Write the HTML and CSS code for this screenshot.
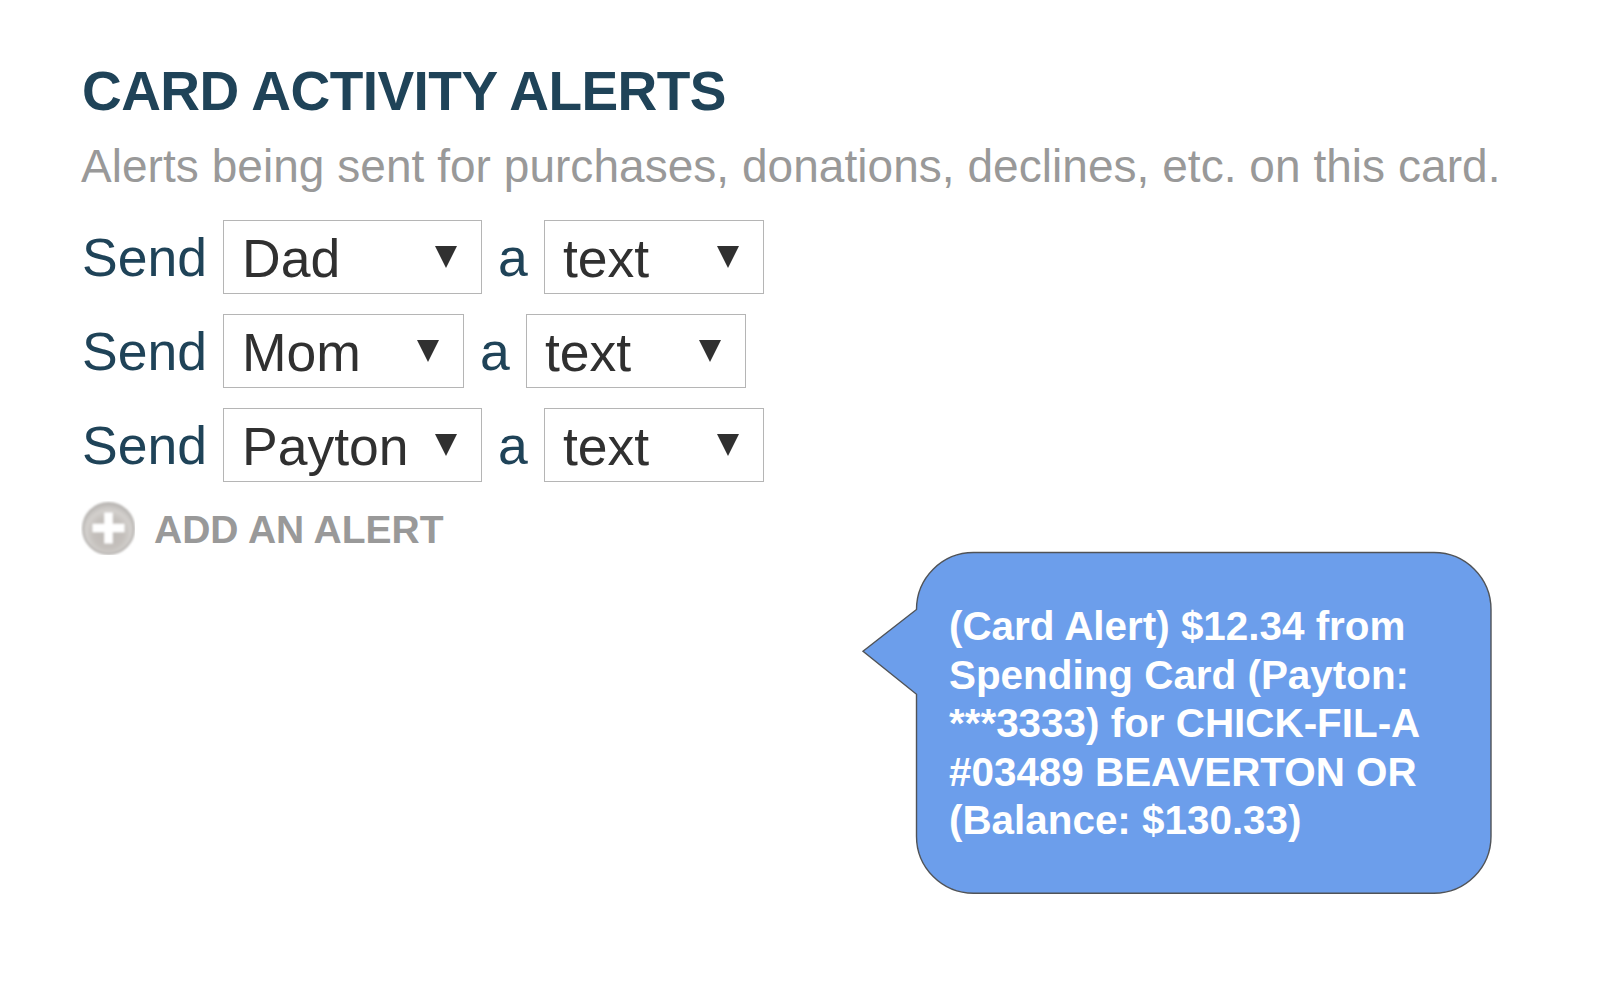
FILE: index.html
```html
<!DOCTYPE html>
<html lang="en">

<head>
    <meta charset="utf-8">
    <title>Card Activity Alerts</title>
    <link rel="stylesheet" href="styles.css">
</head>

<body>

    <div class="page">
        <h1 class="title">CARD ACTIVITY ALERTS</h1>
        <p class="subtitle">Alerts being sent for purchases, donations, declines, etc. on this card.</p>

        <div class="alerts">
            <div class="alert-row">
                <span class="send">Send</span>
                <div class="select wide"><span>Dad</span><i class="arrow"></i></div>
                <span class="article">a</span>
                <div class="select method"><span>text</span><i class="arrow"></i></div>
            </div>
            <div class="alert-row">
                <span class="send">Send</span>
                <div class="select narrow"><span>Mom</span><i class="arrow"></i></div>
                <span class="article">a</span>
                <div class="select method"><span>text</span><i class="arrow"></i></div>
            </div>
            <div class="alert-row">
                <span class="send">Send</span>
                <div class="select wide"><span>Payton</span><i class="arrow"></i></div>
                <span class="article">a</span>
                <div class="select method"><span>text</span><i class="arrow"></i></div>
            </div>
        </div>

        <div class="add-alert">
            <svg class="add-icon" width="54" height="54" viewBox="0 0 54 54">
                <defs>
                    <radialGradient id="disc" cx="50%" cy="58%" r="55%">
                        <stop offset="0" stop-color="#bcb7b3"/>
                        <stop offset="0.55" stop-color="#c4c0bc"/>
                        <stop offset="0.8" stop-color="#d3d0cd"/>
                        <stop offset="1" stop-color="#bfbcb9"/>
                    </radialGradient>
                    <filter id="soft"><feGaussianBlur stdDeviation="1"/></filter>
                </defs>
                <g filter="url(#soft)">
                    <circle cx="27.500" cy="27.500" r="25.500" fill="url(#disc)" stroke="#b8b5b2" stroke-width="2"/>
                    <path d="M27.500 11.500v31M11.500 27h32" stroke="#fff" stroke-width="8.500" fill="none"/>
                </g>
            </svg>
            <span>ADD AN ALERT</span>
        </div>

        <div class="bubble">
            <svg class="bubble-shape" width="632" height="344" viewBox="-55 -1 632 344">
                <path d="M57.500 0.500H518a57 57 0 0 1 57 57V284.200a57 57 0 0 1-57 57H57.500a57 57 0 0 1-57-57V142.300L-53 99.200L0.500 57.500a57 57 0 0 1 57-57z"/>
            </svg>
            <p>(Card Alert) $12.34 from<br>
                Spending Card (Payton:<br>
                ***3333) for CHICK-FIL-A<br>
                #03489 BEAVERTON OR<br>
                (Balance: $130.33)</p>
        </div>
    </div>

</body>

</html>
```

FILE: styles.css
```css
* {
    box-sizing: border-box;
}

body {
    margin: 0;
    background-color: #fff;
    font-family: "Liberation Sans", Arial, sans-serif;
}

.page {
    display: flex;
    flex-direction: column;
    width: 1600px;
    height: 986px;
    padding: 60px 0 0 82px;
    overflow: hidden;
    white-space: nowrap;
}

.title {
    margin: 0;
    font-size: 55px;
    line-height: 62px;
    letter-spacing: -0.55px;
    color: #1f4358;
}

.subtitle {
    margin: 18px 0 0 -1px;
    font-size: 46px;
    line-height: 52px;
    letter-spacing: 0.04px;
    color: #999;
}

.alerts {
    display: flex;
    flex-direction: column;
    gap: 20px;
    margin-top: 28px;
}

.alert-row {
    display: flex;
    height: 74px;
    font-size: 53.5px;
    line-height: 76px;
    color: #1f4358;
}

.send {
    width: 141px;
}

.article {
    width: 62px;
    padding-left: 16px;
}

.select {
    display: flex;
    justify-content: space-between;
    padding: 0 24px 0 18px;
    border: 1px solid #b5b5b5;
    color: #303030;
}

.wide {
    width: 259px;
}

.narrow {
    width: 241px;
}

.method {
    width: 220px;
}

.arrow {
    width: 22px;
    height: 22px;
    margin-top: 25px;
    background-color: #303030;
    clip-path: polygon(0 0, 100% 0, 50% 100%);
}

.add-alert {
    display: flex;
    align-items: center;
    gap: 19px;
    height: 54px;
    margin: 19px 0 0 -1px;
    font-size: 39px;
    font-weight: bold;
    color: #999;
}

.add-alert span {
    padding-top: 3px;
}

.bubble {
    position: relative;
    width: 576px;
    height: 342px;
    margin: -3px 0 0 834px;
    padding: 50px 0 0 33px;
    color: #fff;
    font-size: 40.4px;
    font-weight: bold;
    line-height: 48.6px;
}

.bubble p {
    position: relative;
    margin: 0;
}

/* rounded box and pointer share one outline */
.bubble-shape {
    position: absolute;
    left: -55px;
    top: -1px;
    fill: #6c9eeb;
    stroke: #505357;
    stroke-width: 1.4px;
}
```
